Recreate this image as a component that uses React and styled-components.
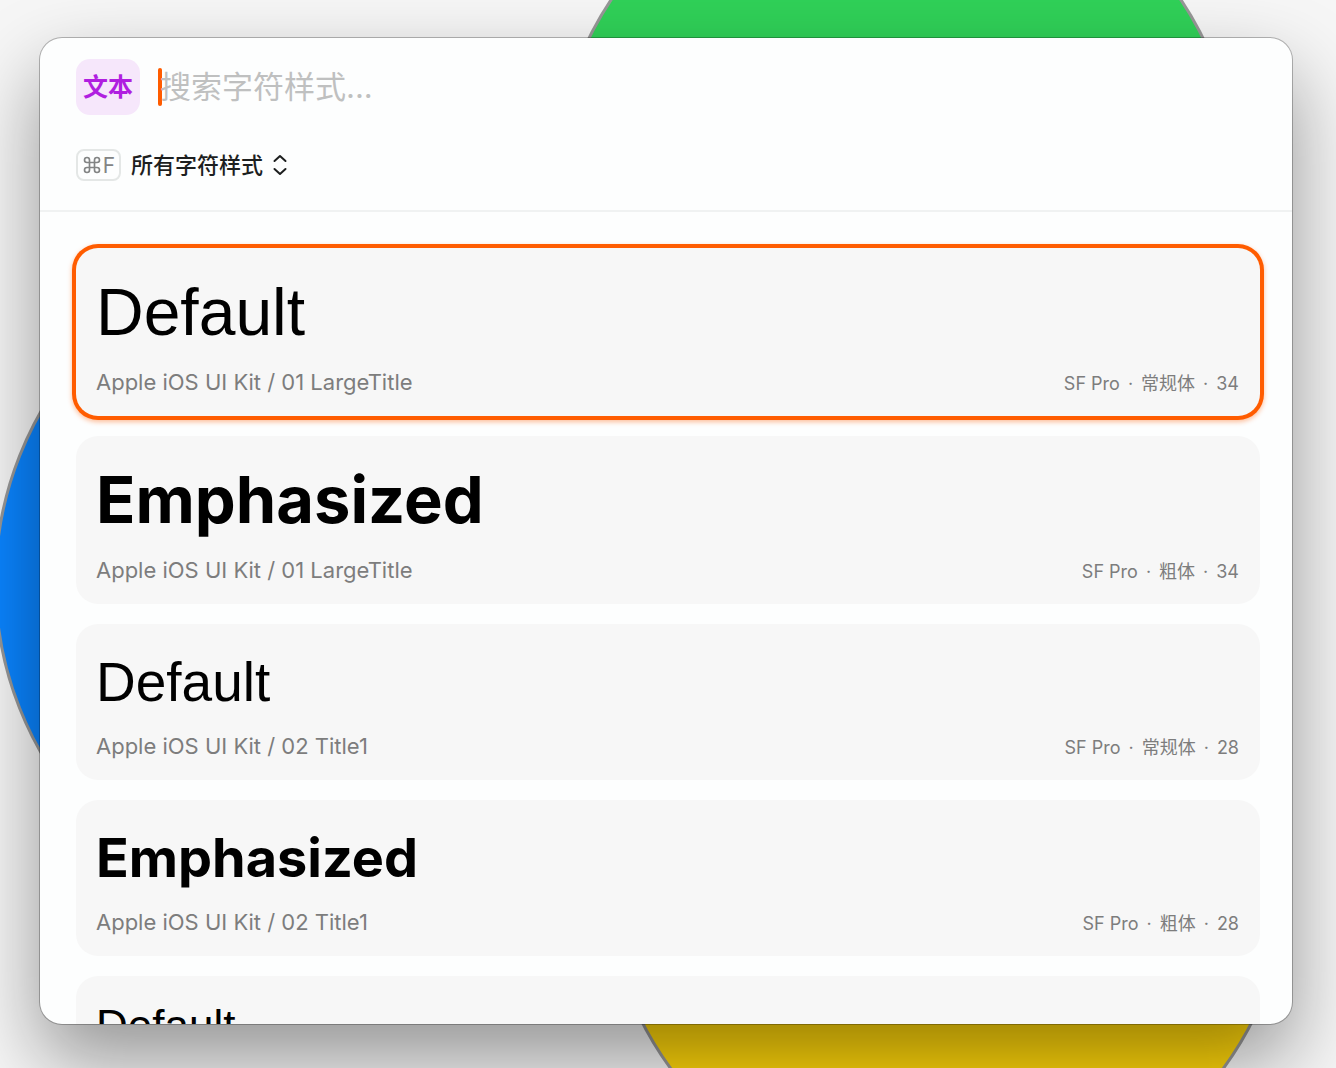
//--dependencies--
import React, { useState } from "react"
import styled, { createGlobalStyle } from "styled-components"

//--data--
const textStyles = [
  { name: "Default", path: "Apple iOS UI Kit / 01 LargeTitle", weight: "常规体", size: 34 },
  { name: "Emphasized", path: "Apple iOS UI Kit / 01 LargeTitle", weight: "粗体", size: 34 },
  { name: "Default", path: "Apple iOS UI Kit / 02 Title1", weight: "常规体", size: 28 },
  { name: "Emphasized", path: "Apple iOS UI Kit / 02 Title1", weight: "粗体", size: 28 },
  { name: "Default", size: 22 },
]

// preview font size (regular, bold) and line height for each point size
const previewSizes = {
  34: { regular: "66px", bold: "65px", line: "80px" },
  28: { regular: "55px", bold: "54px", line: "68px" },
  22: { regular: "44px", bold: "42px", line: "52px" },
}

//--styles--
const GlobalStyle = createGlobalStyle`
  * {
    box-sizing: border-box;
  }
  body {
    margin: 0;
    font-family: Inter, "Noto Sans CJK SC", sans-serif;
    color: #000;
  }
  button, input, select {
    font: inherit;
    color: inherit;
  }
`

//--styled-components
const Canvas = styled.div`
  position: relative;
  display: flex;
  height: 100vh;
  padding: 38px 44px 44px 40px;
  background: #f6f6f6;
  overflow: hidden;
`
const Circle = styled.div`
  position: absolute;
  left: ${props => props.$x}px;
  top: ${props => props.$y}px;
  width: 688px;
  height: 688px;
  border: 3px solid #979797;
  border-radius: 50%;
  background: ${props => props.$color};
`
const Panel = styled.main`
  position: relative;
  display: flex;
  flex-direction: column;
  flex: 1;
  min-width: 0;
  border-radius: 22px;
  background: #fdfefe;
  box-shadow: 0 0 0 1px rgba(0, 0, 0, 0.26), 0 36px 80px rgba(0, 0, 0, 0.4);
  overflow: hidden;
`
const Header = styled.header`
  display: flex;
  flex-direction: column;
  gap: 34px;
  padding: 21px 36px 29px;
  border-bottom: 2px solid #f0f2f2;
`
const SearchRow = styled.div`
  display: flex;
  align-items: center;
`
const Token = styled.span`
  display: flex;
  align-items: center;
  justify-content: center;
  width: 64px;
  height: 56px;
  margin-right: 18px;
  padding-bottom: 4px;
  border-radius: 14px;
  background: #f6e7fb;
  color: #b01fe0;
  font-size: 25px;
  font-weight: 700;
`
const Caret = styled.span`
  width: 4px;
  height: 38px;
  margin-right: -2px;
  border-radius: 2px;
  background: #ff5c00;
`
const SearchInput = styled.input`
  flex: 1;
  min-width: 0;
  height: 48px;
  padding: 0 0 2px;
  border: 0;
  outline: 0;
  background: none;
  font-size: 31px;
  caret-color: #ff5c00;
  &::placeholder {
    color: #bfc0c0;
    opacity: 1;
  }
`
const FilterRow = styled.div`
  display: flex;
  align-items: center;
  gap: 10px;
  height: 32px;
`
const Shortcut = styled.kbd`
  display: flex;
  align-items: center;
  justify-content: center;
  gap: 1px;
  width: 45px;
  height: 32px;
  border: 2px solid #e4e7e6;
  border-radius: 8px;
  color: #828484;
  font-family: inherit;
  font-size: 21px;
`
const SelectBox = styled.div`
  display: grid;
  align-items: center;
  select,
  svg {
    grid-area: 1 / 1;
  }
  svg {
    justify-self: end;
    pointer-events: none;
  }
`
const Select = styled.select`
  appearance: none;
  height: 32px;
  padding: 0 23px 0 0;
  border: 0;
  outline: 0;
  background: none;
  color: #1d1f1f;
  font-size: 22px;
  font-weight: 500;
`
const List = styled.ul`
  display: flex;
  flex-direction: column;
  flex: 1;
  gap: 20px;
  min-height: 0;
  margin: 0;
  padding: 36px 32px 0 36px;
  list-style: none;
  overflow: hidden;
`
const Card = styled.button`
  display: flex;
  flex-direction: column;
  gap: 16px;
  width: 100%;
  padding: 24px 21px 20px 20px;
  border: 0;
  border-radius: 22px;
  outline: 0;
  background: #f7f7f7;
  text-align: left;
  box-shadow: ${props =>
    props.$selected
      ? "0 0 0 4px #ff5c00, 0 2px 5px 4px rgba(255, 92, 0, 0.4)"
      : "none"};
`
const Preview = styled.span`
  font-family: ${props => (props.$bold ? "Inter" : "'Liberation Sans'")}, sans-serif;
  font-size: ${props => previewSizes[props.$size][props.$bold ? "bold" : "regular"]};
  line-height: ${props => previewSizes[props.$size].line};
  font-weight: ${props => (props.$bold ? 700 : 400)};
`
const Details = styled.span`
  display: flex;
  justify-content: space-between;
  align-items: baseline;
  color: #7d7d7d;
  font-size: 22px;
  line-height: 28px;
`
const FontInfo = styled.small`
  display: flex;
  gap: 8px;
  font-size: 18px;
  line-height: 24px;
`

//--components--
const CommandIcon = () => (
  <svg width="20" height="20" viewBox="0 0 24 24" fill="none" stroke="currentColor" strokeWidth="2">
    <path d="M15 6v12a3 3 0 1 0 3-3H6a3 3 0 1 0 3 3V6a3 3 0 1 0-3 3h12a3 3 0 1 0-3-3" />
  </svg>
)

const UpDownIcon = () => (
  <svg
    width="14"
    height="22"
    viewBox="0 0 14 22"
    fill="none"
    stroke="#1d1f1f"
    strokeWidth="2"
    strokeLinecap="round"
    strokeLinejoin="round"
  >
    <path d="M1.5 7L7 2l5.500 5M1.500 15L7 20l5.500-5" />
  </svg>
)

const StyleCard = ({ item, selected, onSelect }) => (
  <li>
    <Card type="button" aria-pressed={selected} $selected={selected} onClick={onSelect}>
      <Preview $size={item.size} $bold={item.name === "Emphasized"}>
        {item.name}
      </Preview>
      {item.path && (
        <Details>
          <span>{item.path}</span>
          <FontInfo>
            <span>SF Pro</span>
            <span>·</span>
            <span>{item.weight}</span>
            <span>·</span>
            <span>{item.size}</span>
          </FontInfo>
        </Details>
      )}
    </Card>
  </li>
)

const App = () => {
  const [query, setQuery] = useState("")
  const [selected, setSelected] = useState(0)

  return (
    <Canvas>
      <GlobalStyle />
      <Circle $x={552} $y={-154} $color="#30d158" />
      <Circle $x={-6} $y={238} $color="#0a84ff" />
      <Circle $x={603} $y={522} $color="#ffd60a" />
      <Panel>
        <Header>
          <SearchRow>
            <Token>文本</Token>
            {query === "" && <Caret />}
            <SearchInput
              type="text"
              aria-label="搜索字符样式"
              placeholder="搜索字符样式..."
              value={query}
              onChange={e => setQuery(e.target.value)}
            />
          </SearchRow>
          <FilterRow>
            <Shortcut>
              <CommandIcon />F
            </Shortcut>
            <SelectBox>
              <Select aria-label="字符样式">
                <option>所有字符样式</option>
              </Select>
              <UpDownIcon />
            </SelectBox>
          </FilterRow>
        </Header>
        <List>
          {textStyles.map((item, i) => (
            <StyleCard
              key={i}
              item={item}
              selected={selected === i}
              onSelect={() => setSelected(i)}
            />
          ))}
        </List>
      </Panel>
    </Canvas>
  )
}

export default App
